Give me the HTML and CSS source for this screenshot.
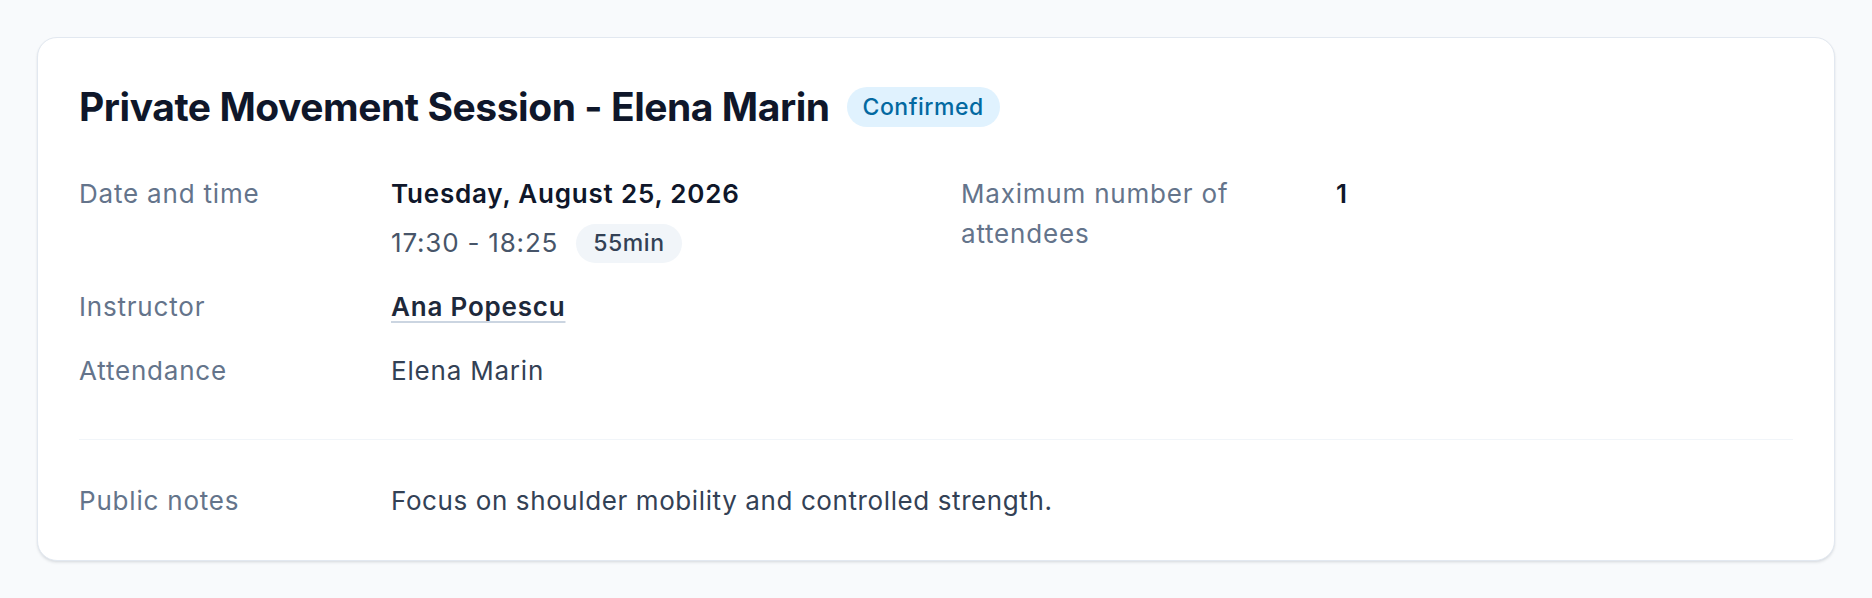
FILE: index.html
```html
<!DOCTYPE html>
<html lang="en">
<head>
<meta charset="utf-8">
<title>Private Movement Session</title>
<link rel="stylesheet" href="styles.css">
</head>
<body>
  <main class="page">
    <section class="card">
      <header class="card-header">
        <h1 class="title">Private Movement Session - Elena Marin</h1>
        <span class="badge">Confirmed</span>
      </header>

      <div class="details">
        <dl class="detail-list detail-list--left">
          <dt class="label">Date and time</dt>
          <dd class="value">
            <div class="date">Tuesday, August 25, 2026</div>
            <div class="time-row">
              <span class="time">17:30 - 18:25</span>
              <span class="pill">55min</span>
            </div>
          </dd>

          <dt class="label">Instructor</dt>
          <dd class="value"><a class="link" href="#">Ana Popescu</a></dd>

          <dt class="label">Attendance</dt>
          <dd class="value value--plain">Elena Marin</dd>
        </dl>

        <dl class="detail-list detail-list--right">
          <dt class="label">Maximum number of attendees</dt>
          <dd class="value value--strong">1</dd>
        </dl>
      </div>

      <div class="notes">
        <dl class="detail-list detail-list--full">
          <dt class="label">Public notes</dt>
          <dd class="value value--plain value--notes">Focus on shoulder mobility and controlled strength.</dd>
        </dl>
      </div>
    </section>
  </main>
</body>
</html>
```

FILE: styles.css
```css
* {
  box-sizing: border-box;
}

html,
body {
  margin: 0;
  padding: 0;
  background: #f8fafc;
}

body {
  font-family: Inter, "Noto Sans", "Liberation Sans", sans-serif;
  color: #0f172a;
  font-size: 26px;
  line-height: 40px;
  letter-spacing: 0.8px;
}

.page {
  padding: 37px 37px 37px 37px;
}

.card {
  background: #ffffff;
  border: 1px solid #e2e8f0;
  border-radius: 20px;
  box-shadow: 0 2px 3px rgba(15, 23, 42, 0.07), 0 1px 2px rgba(15, 23, 42, 0.05);
  padding: 45px 41px 39px 41px;
}

.card-header {
  display: flex;
  align-items: center;
  gap: 17px;
}

.title {
  margin: 0;
  font-size: 39px;
  line-height: 48px;
  font-weight: 700;
  letter-spacing: -0.45px;
  color: #0f172a;
}

.badge {
  display: inline-flex;
  align-items: center;
  height: 40px;
  padding: 0 16px;
  border-radius: 999px;
  background: #e0f2fe;
  color: #0369a1;
  font-size: 23px;
  font-weight: 500;
  line-height: 40px;
  letter-spacing: 0.5px;
}

.details {
  display: flex;
  gap: 32px;
  margin-top: 43px;
}

.detail-list {
  display: grid;
  column-gap: 32px;
  row-gap: 24px;
  margin: 0;
  align-content: start;
}

.detail-list--left {
  grid-template-columns: 280px 1fr;
  width: 850px;
  flex: none;
}

.detail-list--right {
  grid-template-columns: 343px 1fr;
  flex: 1;
}

.detail-list--full {
  grid-template-columns: 280px 1fr;
}

.label {
  margin: 0;
  color: #64748b;
  font-weight: 400;
}

.value {
  margin: 0;
  color: #0f172a;
}

.value--plain {
  color: #334155;
}

.value--notes {
  letter-spacing: 0.6px;
}

.value--strong {
  font-weight: 600;
}

.date {
  font-weight: 600;
  color: #0f172a;
}

.time-row {
  display: flex;
  align-items: center;
  gap: 18px;
  margin-top: 9px;
}

.time {
  color: #475569;
}

.pill {
  display: inline-flex;
  align-items: center;
  height: 39px;
  padding: 0 17px;
  border-radius: 999px;
  background: #f1f5f9;
  color: #334155;
  font-size: 23px;
  font-weight: 500;
  letter-spacing: 0.6px;
}

.link {
  color: #1e293b;
  font-weight: 600;
  text-decoration: underline;
  text-decoration-color: #cbd5e1;
  text-decoration-thickness: 2px;
  text-underline-offset: 5px;
}

.notes {
  margin-top: 48px;
  padding-top: 41px;
  border-top: 1.5px solid #f1f5f9;
}
```
